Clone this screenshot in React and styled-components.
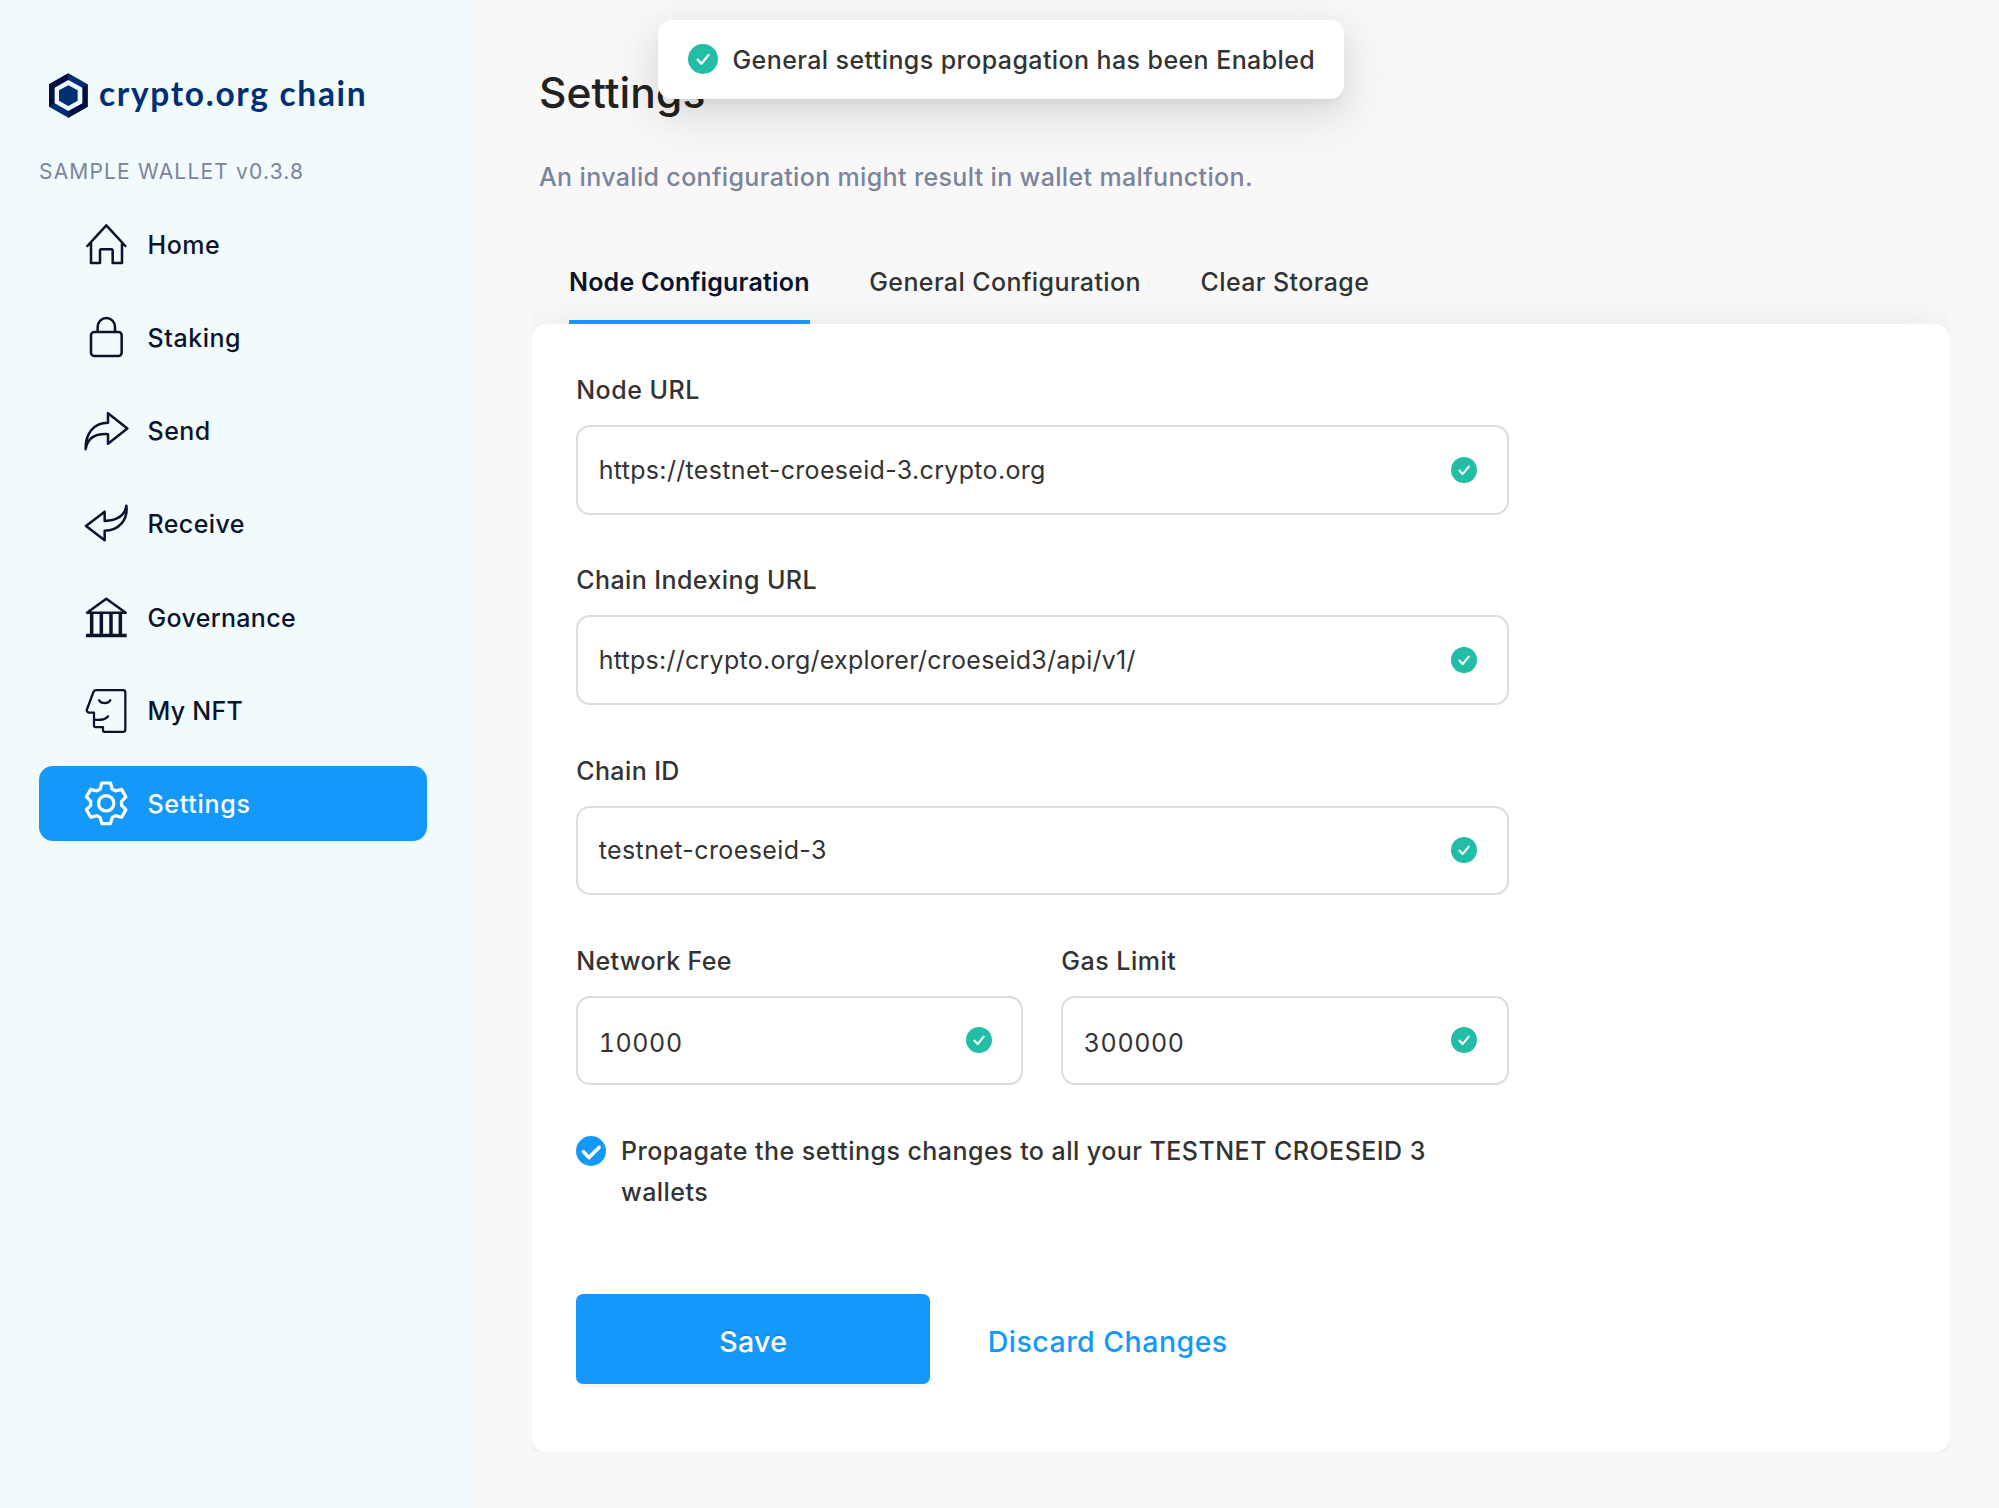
import React, { useState } from "react";
import styled, { createGlobalStyle, css } from "styled-components";

const GlobalStyle = createGlobalStyle`
  *, *::before, *::after { box-sizing: border-box; }
  body {
    margin: 0;
    background: #f8f8f8;
    color: #333;
    font-family: Inter, "Liberation Sans", sans-serif;
    font-size: 25px;
    -webkit-font-smoothing: antialiased;
  }
  button, input { font: inherit; color: inherit; letter-spacing: inherit; }
`;

const Layout = styled.div`
  display: flex;
  width: 1999px;
  height: 1508px;
  overflow: hidden;
  position: relative;
`;

const Sidebar = styled.aside`
  flex: 0 0 472px;
  background: #f1fafd;
  padding: 68px 0 0 39px;
`;

const Brand = styled.div`
  display: flex;
  align-items: center;
  gap: 11px;
  height: 53px;
  padding-left: 10px;

  svg { margin-top: 1px; }
`;

const BrandName = styled.span`
  padding-bottom: 4px;
  font-family: Lato, Inter, sans-serif;
  font-weight: 700;
  font-size: 33.5px;
  line-height: 40px;
  letter-spacing: 1.68px;
  color: #012f74;
  white-space: nowrap;
`;

const Version = styled.div`
  margin-top: 38px;
  height: 26px;
  line-height: 26px;
  font-size: 21px;
  color: #7b849b;
  letter-spacing: 1.18px;
  white-space: nowrap;
`;

const Menu = styled.nav`
  display: flex;
  flex-direction: column;
  gap: 18.6px;
  margin-top: 21.8px;
  width: 388.3px;
`;

const MenuItem = styled.a`
  display: flex;
  align-items: center;
  gap: 18.5px;
  height: 74.6px;
  padding-left: 44px;
  border-radius: 14px;
  font-weight: 500;
  letter-spacing: ${(p) => p.$track || 0}px;
  color: ${(p) => (p.$active ? "#fff" : "#0b142a")};
  background: ${(p) => (p.$active ? "#1499fb" : "transparent")};

  span { padding-top: 1.5px; }
`;

const MenuIcon = styled.svg`
  width: 46px;
  height: 46px;
  flex: none;
  fill: none;
  stroke: currentColor;
  stroke-width: ${(p) => p.$weight || 7.6};
  stroke-linecap: round;
  stroke-linejoin: round;
`;

const Main = styled.main`
  flex: 1;
  padding: 65px 50px 0 60px;
`;

const Title = styled.h1`
  margin: 0 0 0 7px;
  font-size: 42.5px;
  line-height: 56px;
  font-weight: 500;
  letter-spacing: 0.1px;
  color: #222;
`;

const Subtitle = styled.p`
  margin: 38px 0 0 7px;
  line-height: 36px;
  font-weight: 500;
  letter-spacing: 0.35px;
  color: #7b849b;
`;

const Panel = styled.section`
  margin-top: 52px;
  width: 1417.3px;
  overflow: hidden;
`;

const Tabs = styled.div`
  display: flex;
  gap: 59.5px;
  height: 77.3px;
  padding-left: 37px;
`;

const Tab = styled.button`
  position: relative;
  z-index: 1;
  padding: 15px 0 0;
  border: 0;
  border-bottom: 4px solid ${(p) => (p.$active ? "#1499fb" : "transparent")};
  background: none;
  display: flex;
  align-items: flex-start;
  line-height: 40px;
  font-weight: ${(p) => (p.$active ? 600 : 500)};
  letter-spacing: ${(p) => (p.$active ? 0.2 : 0.4)}px;
  color: ${(p) => (p.$active ? "#0b142a" : "#333")};
  white-space: nowrap;
`;

const Card = styled.form`
  height: 1128px;
  padding: 45px 0 0 44.2px;
  background: #fff;
  border-radius: 14px;
  box-shadow: 0 4px 38px rgba(0, 0, 0, 0.08);
`;

const Field = styled.div`
  width: ${(p) => p.$width || 932.4}px;
  height: 190.15px;
`;

const FieldRow = styled.div`
  display: flex;
  gap: 37.8px;
`;

const Label = styled.label`
  display: block;
  height: 56px;
  padding-top: 1px;
  line-height: 41px;
  font-weight: 500;
  letter-spacing: ${(p) => p.$track || 0}px;
`;

const InputBox = styled.div`
  display: flex;
  align-items: center;
  height: 89.3px;
  padding: 0 29.4px 0 20.5px;
  border: 2px solid #dcdcdc;
  border-radius: 14px;
`;

const Input = styled.input`
  flex: 1;
  min-width: 0;
  height: 40px;
  padding: ${(p) => (p.$numeric ? "5px 0 0" : "0")};
  border: 0;
  outline: 0;
  background: none;
  font-variant-numeric: ${(p) => (p.$numeric ? "tabular-nums" : "normal")};
  letter-spacing: ${(p) => p.$track || 0}px;
`;

const Dot = styled.svg`
  width: ${(p) => p.$size}px;
  height: ${(p) => p.$size}px;
  flex: none;
  fill: none;
  stroke: #fff;
  stroke-linecap: round;
  stroke-linejoin: round;
`;

const Propagate = styled.label`
  display: flex;
  gap: 14.8px;
  width: 890px;
  margin-top: 1px;
  line-height: 41px;
  font-weight: 500;
  letter-spacing: 0.46px;
  ${Dot} { margin-top: 4.8px; }
`;

const Actions = styled.div`
  display: flex;
  align-items: center;
  gap: 57.3px;
  margin-top: 81.3px;
`;

const buttonText = css`
  border: 0;
  font-size: 28.5px;
  font-weight: 500;
  letter-spacing: ${(p) => p.$track || 0}px;
`;

const SaveButton = styled.button`
  ${buttonText}
  width: 354.3px;
  height: 89.5px;
  padding: 5px 0 0;
  border-radius: 7px;
  background: #1499fb;
  color: #fff;
  box-shadow: 0 4px 0 rgba(0, 0, 0, 0.035);
  text-shadow: 0 -2px 0 rgba(0, 0, 0, 0.1);
`;

const TextButton = styled.button`
  ${buttonText}
  padding: 5px 0 0;
  background: none;
  color: #1499fb;
`;

const Toast = styled.div`
  position: absolute;
  left: 658.3px;
  top: 20.3px;
  width: 686px;
  height: 78.4px;
  display: flex;
  align-items: center;
  gap: 14.5px;
  padding-left: 29.7px;
  border-radius: 14px;
  background: #fff;
  font-weight: 500;
  letter-spacing: 0.41px;
  white-space: nowrap;
  box-shadow:
    0 6px 11px -7px rgba(0, 0, 0, 0.12),
    0 11px 30px rgba(0, 0, 0, 0.08),
    0 17px 52px 15px rgba(0, 0, 0, 0.05);

  span { padding-top: 1.5px; }
`;

const Success = ({ size }) => (
  <Dot $size={size} viewBox="0 0 30 30">
    <circle cx="15" cy="15" r="15" fill="#21bda5" stroke="none" />
    <path d="M9.7 15.6 L13.4 19.7 L20.5 11" strokeWidth="2.4" />
  </Dot>
);

const gearPoints = Array.from({ length: 6 }, (_, i) => {
  const a = (i * Math.PI) / 3;
  return [[-18, -43], [-13, -61], [13, -61], [18, -43]]
    .map(([x, y]) =>
      [259 + x * Math.cos(a) - y * Math.sin(a), 191 + x * Math.sin(a) + y * Math.cos(a)]
        .map((n) => n.toFixed(1))
        .join(",")
    )
    .join(" ");
}).join(" ");

const MENU = [
  {
    name: "Home", box: "159 63 138 138", track: 0.55,
    icon: <path d="M172 138 L229 76 L286 138 M183 128 V189 H210 V152 a4 4 0 0 1 4 -4 H244 a4 4 0 0 1 4 4 V189 H276 V128" />,
  },
  {
    name: "Staking", box: "159 343 138 138", track: 0.55,
    icon: <><rect x="183" y="397" width="92" height="72" rx="10" /><path d="M203 396 V381 a26 26 0 0 1 52 0 V396" /></>,
  },
  {
    name: "Send", box: "159 622.5 138 138", track: 0.5,
    icon: <path d="M292 687 L234 641 V670 C190 671 166 702 167 749 C172 715 197 702 234 704 V733 Z" />,
  },
  {
    name: "Receive", box: "159 92 138 138", track: 0.4,
    icon: <path d="M168 167 L224 124 V152 C262 150 285 137 289 106 C295 150 265 181 224 181 V210 Z" />,
  },
  {
    name: "Governance", box: "159 371.7 138 138", track: 0.32,
    icon: <><path d="M229 386 L171 428 H287 Z" /><path strokeLinecap="butt" strokeWidth="10.5" d="M168 496 H290 M185 428 V494 M214 428 V494 M243 428 V494 M271 428 V494" /></>,
  },
  {
    name: "My NFT", box: "159 651.3 138 138", track: 0.25,
    icon: <><path strokeWidth="6.8" d="M198 661 H279 a7 7 0 0 1 7 7 V779 a7 7 0 0 1 -7 7 H225 a6 6 0 0 1 -6 -6 V772 H197 a5 5 0 0 1 -5 -5 V728 H177 a7 7 0 0 1 -6 -10 L190 667 a9 9 0 0 1 8 -6 Z" /><path strokeWidth="6.8" d="M207 691 C214 703 234 703 241 691 M194 749 C212 751 231 748 234 739" /></>,
  },
  {
    name: "Settings", box: "189.5 121 138 138", active: true, weight: 9.6, track: 0.7,
    icon: <><polygon points={gearPoints} /><circle cx="259" cy="191" r="23" /></>,
  },
];

const TextField = ({ label, value, width, numeric, track, labelTrack }) => {
  const [text, setText] = useState(value);
  return (
    <Field $width={width}>
      <Label $track={labelTrack}>{label}</Label>
      <InputBox>
        <Input $numeric={numeric} $track={track} value={text} onChange={(e) => setText(e.target.value)} />
        <Success size={26} />
      </InputBox>
    </Field>
  );
};

export default function App() {
  return (
    <Layout>
      <GlobalStyle />
      <Sidebar>
        <Brand>
          <svg width="39" height="45" viewBox="87 67 117 135">
            <path fill="#012f74" d="M145 68 L203 101 V168 L145 201 L87 168 V101 Z" />
            <path fill="#020f3f" d="M145 68 L87 101 V168 L104 158 V111 L145 88 Z M145 201 L203 168 V101 L187 111 V158 L145 181 Z" />
            <path fill="#f1fafd" d="M145 88 L187 111 V158 L145 181 L104 158 V111 Z" />
            <path fill="#012f74" d="M145 104 L173 119 V150 L145 166 L117 150 V119 Z" />
          </svg>
          <BrandName>crypto.org chain</BrandName>
        </Brand>
        <Version>SAMPLE WALLET v0.3.8</Version>
        <Menu>
          {MENU.map((m) => (
            <MenuItem key={m.name} $active={m.active} $track={m.track}>
              <MenuIcon viewBox={m.box} $weight={m.weight}>{m.icon}</MenuIcon>
              <span>{m.name}</span>
            </MenuItem>
          ))}
        </Menu>
      </Sidebar>
      <Main>
        <Title>Settings</Title>
        <Subtitle>An invalid configuration might result in wallet malfunction.</Subtitle>
        <Panel>
          <Tabs>
            <Tab $active>Node Configuration</Tab>
            <Tab>General Configuration</Tab>
            <Tab>Clear Storage</Tab>
          </Tabs>
          <Card>
            <TextField label="Node URL" labelTrack={0.5} value="https://testnet-croeseid-3.crypto.org" track={0.33} />
            <TextField label="Chain Indexing URL" labelTrack={0.42} value="https://crypto.org/explorer/croeseid3/api/v1/" track={0.26} />
            <TextField label="Chain ID" labelTrack={0.4} value="testnet-croeseid-3" track={0.39} />
            <FieldRow>
              <TextField label="Network Fee" labelTrack={0.35} value="10000" width={447.3} numeric track={0.6} />
              <TextField label="Gas Limit" labelTrack={0.5} value="300000" width={447.3} numeric track={0.6} />
            </FieldRow>
            <Propagate>
              <Dot $size={30} viewBox="0 0 30 30">
                <circle cx="15" cy="15" r="15" fill="#1499fb" stroke="none" />
                <path d="M7.4 15.8 L13 21.6 L23 11.4" strokeWidth="3.6" />
              </Dot>
              <span>Propagate the settings changes to all your TESTNET CROESEID 3 wallets</span>
            </Propagate>
            <Actions>
              <SaveButton type="button" $track={0.4}>Save</SaveButton>
              <TextButton type="button" $track={0.47}>Discard Changes</TextButton>
            </Actions>
          </Card>
        </Panel>
      </Main>
      <Toast>
        <Success size={30} />
        <span>General settings propagation has been Enabled</span>
      </Toast>
    </Layout>
  );
}
